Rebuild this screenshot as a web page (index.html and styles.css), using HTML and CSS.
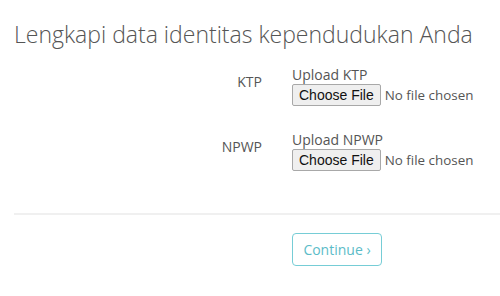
FILE: index.html
```html
<!DOCTYPE html>
<html lang="id">
<head>
  <meta charset="UTF-8">
  <meta name="viewport" content="width=device-width, initial-scale=1.0">
  <title>Data Identitas</title>
  <link rel="stylesheet" href="styles.css">
</head>
<body>
  <div class="page">
    <h1 class="title">Lengkapi data identitas kependudukan Anda</h1>
    <form class="form">
      <div class="row">
        <label class="row-label" for="ktp">KTP</label>
        <div class="field">
          <div class="field-caption">Upload KTP</div>
          <input id="ktp" type="file">
        </div>
      </div>
      <div class="row">
        <label class="row-label" for="npwp">NPWP</label>
        <div class="field">
          <div class="field-caption">Upload NPWP</div>
          <input id="npwp" type="file">
        </div>
      </div>
      <hr class="divider">
      <div class="actions">
        <button type="button" class="btn-continue">Continue &rsaquo;</button>
      </div>
    </form>
  </div>
</body>
</html>
```

FILE: styles.css
```css
body { margin: 0; background: #ffffff; font-family: "Open Sans", Arial, sans-serif; color: #555555; overflow: hidden; }
.page { padding: 19px 0 0 14px; }
.title { margin: 0 0 17px; font-size: 23px; font-weight: 300; color: #555555; line-height: 30px; }
.form { margin: 0; }
.row { display: grid; grid-template-columns: 248px minmax(0, 1fr); column-gap: 30px; margin-bottom: 25px; }
.row-label { text-align: right; font-size: 14px; line-height: 18px; padding-top: 7px; color: #555555; }
.field { min-width: 0; }
.field-caption { font-size: 14px; line-height: 18px; color: #555555; }
.field input { display: block; width: 190px; max-width: 100%; font-family: "Open Sans", Arial, sans-serif; font-size: 13.4px; color: #555555; margin: 0; }
.field input::file-selector-button { font-family: "Liberation Sans", Arial, sans-serif; font-size: 14px; color: #111111; background: #efefef; border: 1px solid #a8a8a8; border-radius: 2px; padding: 2px 6px; margin-right: 4px; }
.divider { border: 0; border-top: 2px solid #f0f0f0; margin: 42px 0 18px; }
.actions { padding-left: 278px; }
.btn-continue { font-family: "Open Sans", Arial, sans-serif; font-size: 14px; color: #5bbcc8; background: #ffffff; border: 1px solid #76cdd6; border-radius: 4px; width: 90px; height: 33px; padding: 0; cursor: pointer; }
```
